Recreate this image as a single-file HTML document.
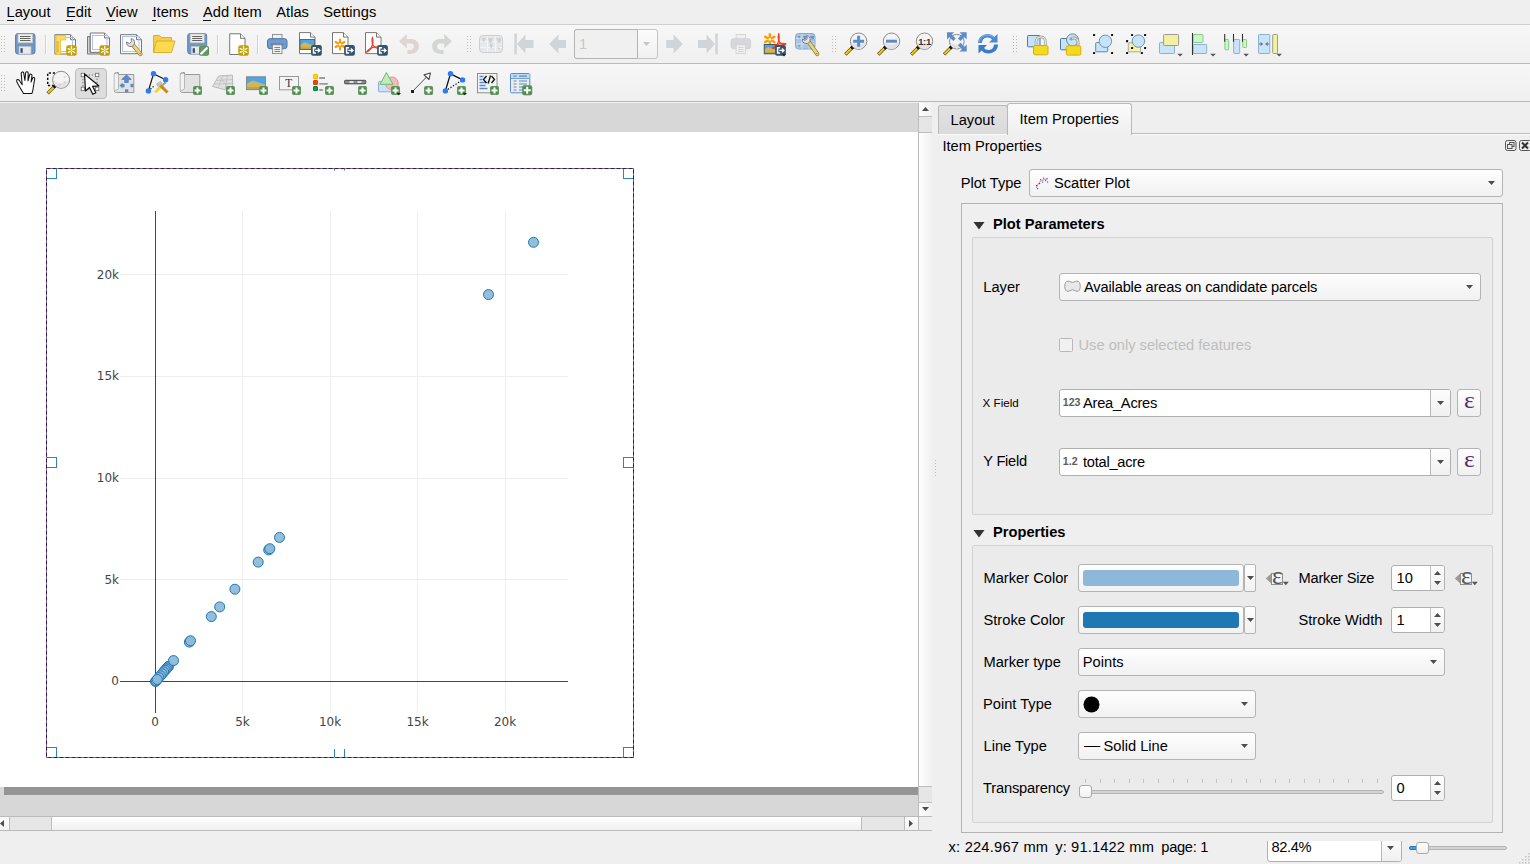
<!DOCTYPE html>
<html><head><meta charset="utf-8"><title>Layout</title>
<style>
html,body{margin:0;padding:0}
body{width:1530px;height:864px;overflow:hidden;background:#efefef;position:relative;
font-family:"Liberation Sans",sans-serif;font-size:14.67px;color:#000}
.b{position:absolute;box-sizing:border-box}
.t{position:absolute;white-space:nowrap;line-height:20px}
.combo{border:1px solid #b4b4b4;border-radius:3px;background:linear-gradient(#fefefe,#f1f1f1)}
.edit{border:1px solid #b0b0b0;border-radius:3px;background:#fff}
.frame{border:1px solid #c9c9c9}
u{text-decoration:none;border-bottom:1px solid #000}
.dis{color:#bebebe}
</style></head><body>

<div class="t " style="left:6.5px;top:2.00px;font-size:14.67px;letter-spacing:0.000px;">Layout</div>
<div class="t " style="left:66px;top:2.00px;font-size:14.67px;letter-spacing:0.000px;">Edit</div>
<div class="t " style="left:106px;top:2.00px;font-size:14.67px;letter-spacing:0.000px;">View</div>
<div class="t " style="left:152.5px;top:2.00px;font-size:14.67px;letter-spacing:0.000px;">Items</div>
<div class="t " style="left:203px;top:2.00px;font-size:14.67px;letter-spacing:0.000px;">Add Item</div>
<div class="t " style="left:276.3px;top:2.00px;font-size:14.67px;letter-spacing:0.000px;">Atlas</div>
<div class="t " style="left:323.3px;top:2.00px;font-size:14.67px;letter-spacing:0.000px;">Settings</div>
<div class="b " style="left:6.5px;top:20px;width:7.5px;height:1px;background:#111"></div>
<div class="b " style="left:65.6px;top:20px;width:7.6px;height:1px;background:#111"></div>
<div class="b " style="left:106px;top:20px;width:9.2px;height:1px;background:#111"></div>
<div class="b " style="left:152.4px;top:20px;width:3.6px;height:1px;background:#111"></div>
<div class="b " style="left:203px;top:20px;width:8.2px;height:1px;background:#111"></div>
<div class="b " style="left:0px;top:24px;width:1530px;height:40px;background:linear-gradient(#f7f7f7,#efefef);border-top:1px solid #cfcfcf;"></div>
<div class="b " style="left:0px;top:63px;width:1530px;height:39px;background:linear-gradient(#f7f7f7,#efefef);border-top:1px solid #bcbcbc;"></div>
<div class="b " style="left:0px;top:101px;width:1530px;height:1px;background:#b9b9b9"></div>
<svg class="b" style="left:1px;top:36px;" width="4" height="16" viewBox="0 0 4 16"><rect x="0" y="0" width="1" height="1" fill="#bcbcbc"/><rect x="3" y="0" width="1" height="1" fill="#bcbcbc"/><rect x="0" y="3" width="1" height="1" fill="#bcbcbc"/><rect x="3" y="3" width="1" height="1" fill="#bcbcbc"/><rect x="0" y="6" width="1" height="1" fill="#bcbcbc"/><rect x="3" y="6" width="1" height="1" fill="#bcbcbc"/><rect x="0" y="9" width="1" height="1" fill="#bcbcbc"/><rect x="3" y="9" width="1" height="1" fill="#bcbcbc"/><rect x="0" y="12" width="1" height="1" fill="#bcbcbc"/><rect x="3" y="12" width="1" height="1" fill="#bcbcbc"/><rect x="0" y="15" width="1" height="1" fill="#bcbcbc"/><rect x="3" y="15" width="1" height="1" fill="#bcbcbc"/></svg>
<svg class="b" style="left:1px;top:75px;" width="4" height="16" viewBox="0 0 4 16"><rect x="0" y="0" width="1" height="1" fill="#bcbcbc"/><rect x="3" y="0" width="1" height="1" fill="#bcbcbc"/><rect x="0" y="3" width="1" height="1" fill="#bcbcbc"/><rect x="3" y="3" width="1" height="1" fill="#bcbcbc"/><rect x="0" y="6" width="1" height="1" fill="#bcbcbc"/><rect x="3" y="6" width="1" height="1" fill="#bcbcbc"/><rect x="0" y="9" width="1" height="1" fill="#bcbcbc"/><rect x="3" y="9" width="1" height="1" fill="#bcbcbc"/><rect x="0" y="12" width="1" height="1" fill="#bcbcbc"/><rect x="3" y="12" width="1" height="1" fill="#bcbcbc"/><rect x="0" y="15" width="1" height="1" fill="#bcbcbc"/><rect x="3" y="15" width="1" height="1" fill="#bcbcbc"/></svg>
<svg class="b" style="left:13px;top:32px;overflow:visible" width="24" height="24" viewBox="0 0 24 24"><rect x="2.5" y="1.5" width="19.5" height="20.5" rx="2.500" fill="#6d97c5" stroke="#5a84b6"/><rect x="5.0" y="2.0" width="14.5" height="8.8" fill="#eeeeec" stroke="#c4c4c4" stroke-width="0.700"/><path d="M7.0 4.5h10.5M7.0 6.5h10.5M7.0 8.5h10.5" stroke="#555" stroke-width="0.900"/><rect x="6.0" y="14.4" width="12.0" height="7.6" fill="#e9e9e9" stroke="#bdbdbd" stroke-width="0.700"/><rect x="7.5" y="16.2" width="2.200" height="4.6" fill="#2f4f72"/></svg>
<svg class="b" style="left:53px;top:32px;overflow:visible" width="24" height="24" viewBox="0 0 24 24"><path d="M1.9 2.7H17.5L22.5 7.7V22.0H1.9z" fill="#fff" stroke="#777" stroke-width="1" stroke-linejoin="round"/><path d="M17.5 2.7V7.7H22.5" fill="#f4f4f4" stroke="#777" stroke-width="1" stroke-linejoin="round"/><rect x="5.500" y="5.500" width="14" height="14" fill="none" stroke="#aebff5" stroke-width="1"/><path d="M3 3.500H12.500V8H7.500V22.500H3z" fill="#fbdc5e" stroke="#e8bc30" stroke-width="0.800" stroke-linejoin="round"/><path d="M3.500 10h2.500M3.500 12h2M3.500 14h2.500M3.500 16h2M3.500 18h2.500M3.500 20h2" stroke="#c0901a" stroke-width="0.800"/><rect x="13.2" y="13.3" width="10.5" height="10.5" rx="2" fill="#c4a000"/><g stroke="#fff" stroke-width="1.300" stroke-linecap="round"><path d="M18.45 14.75V22.35M15.149999999999999 16.650000000000002L21.75 20.45M15.149999999999999 20.45L21.75 16.650000000000002"/></g><circle cx="18.45" cy="18.55" r="1.300" fill="#c4a000"/><circle cx="18.45" cy="18.55" r="0.700" fill="#fff"/></svg>
<svg class="b" style="left:86px;top:32px;overflow:visible" width="24" height="24" viewBox="0 0 24 24"><path d="M1.500 4.500H4V20H19V22H1.500z" fill="#d4d4d4" stroke="#777" stroke-linejoin="round"/><path d="M4.3 1H18.5L23.5 6V20.3H4.3z" fill="#fff" stroke="#777" stroke-width="1" stroke-linejoin="round"/><path d="M18.5 1V6H23.5" fill="#f4f4f4" stroke="#777" stroke-width="1" stroke-linejoin="round"/><rect x="6.500" y="3.500" width="14.500" height="14" fill="none" stroke="#aebff5" stroke-width="1"/><rect x="13.5" y="13.3" width="10.5" height="10.5" rx="2" fill="#c4a000"/><g stroke="#fff" stroke-width="1.300" stroke-linecap="round"><path d="M18.75 14.75V22.35M15.45 16.650000000000002L22.05 20.45M15.45 20.45L22.05 16.650000000000002"/></g><circle cx="18.75" cy="18.55" r="1.300" fill="#c4a000"/><circle cx="18.75" cy="18.55" r="0.700" fill="#fff"/></svg>
<svg class="b" style="left:119px;top:32px;overflow:visible" width="24" height="24" viewBox="0 0 24 24"><path d="M1.5 2.7H17.5L22.5 7.7V21.7H1.5z" fill="#fff" stroke="#777" stroke-width="1" stroke-linejoin="round"/><path d="M17.5 2.7V7.7H22.5" fill="#f4f4f4" stroke="#777" stroke-width="1" stroke-linejoin="round"/><rect x="3.500" y="4.500" width="16.500" height="15" fill="none" stroke="#aebff5" stroke-width="1"/><path d="M13.8 12.8L21.5 22" stroke="#8a7a3a" stroke-width="4.200" stroke-linecap="round"/><path d="M14.0 13.0L21.5 22" stroke="#ecd47a" stroke-width="2.800" stroke-linecap="round"/><circle cx="21.1" cy="21.6" r="0.600" fill="#6a5a2a"/><path d="M7.7 10.0A3.900 3.900 0 1 0 12.0 6.7L12.5 9.5L10.5 11.5z" fill="#e2e2e2" stroke="#7c7c7c" stroke-width="1" stroke-linejoin="round"/></svg>
<svg class="b" style="left:152px;top:32px;overflow:visible" width="24" height="24" viewBox="0 0 24 24"><path d="M1.500 20.500V3.500H7.500L9 5.500H19.500V9" fill="#f5cf45" stroke="#d8b030" stroke-linejoin="round"/><path d="M1.500 20.500L4.500 9H23L19.500 20.500z" fill="#fcd94f" stroke="#d8b030" stroke-linejoin="round"/></svg>
<svg class="b" style="left:185px;top:32px;overflow:visible" width="24" height="24" viewBox="0 0 24 24"><rect x="2.7" y="1.5" width="19" height="20.5" rx="2.500" fill="#6d97c5" stroke="#5a84b6"/><rect x="5.2" y="2.0" width="14" height="8.8" fill="#eeeeec" stroke="#c4c4c4" stroke-width="0.700"/><path d="M7.2 4.5h10M7.2 6.5h10M7.2 8.5h10" stroke="#555" stroke-width="0.900"/><rect x="6.2" y="14.4" width="11.5" height="7.6" fill="#e9e9e9" stroke="#bdbdbd" stroke-width="0.700"/><rect x="7.7" y="16.2" width="2.200" height="4.6" fill="#2f4f72"/><rect x="14" y="14" width="10" height="9.800" rx="2" fill="#4e8b4e"/><rect x="14.600" y="14.600" width="8.800" height="8.600" rx="1.500" fill="#6fa36f" opacity="0.6"/><path d="M16.200 21.600L21.800 16.200" stroke="#fff" stroke-width="2.200" stroke-linecap="round"/></svg>
<svg class="b" style="left:226px;top:32px;overflow:visible" width="24" height="24" viewBox="0 0 24 24"><path d="M3.7 1.8H14.5L19.0 6.3V22.5H3.7z" fill="#fff" stroke="#777" stroke-width="1" stroke-linejoin="round"/><path d="M14.5 1.8V6.3H19.0" fill="#f4f4f4" stroke="#777" stroke-width="1" stroke-linejoin="round"/><rect x="12.3" y="13.2" width="10.5" height="10.5" rx="2" fill="#c4a000"/><g stroke="#fff" stroke-width="1.300" stroke-linecap="round"><path d="M17.55 14.649999999999999V22.25M14.25 16.55L20.85 20.349999999999998M14.25 20.349999999999998L20.85 16.55"/></g><circle cx="17.55" cy="18.45" r="1.300" fill="#c4a000"/><circle cx="17.55" cy="18.45" r="0.700" fill="#fff"/></svg>
<svg class="b" style="left:264px;top:32px;overflow:visible" width="24" height="24" viewBox="0 0 24 24"><rect x="8.500" y="2.500" width="9.500" height="7" fill="#f0f0f0" stroke="#8a8a8a" stroke-width="0.900"/><rect x="3.500" y="6.700" width="19.500" height="10" rx="2.500" fill="#6f9bcf" stroke="#4a73a8"/><rect x="7" y="11.500" width="12.500" height="2" fill="#4a73a8" opacity="0.8"/><rect x="8.500" y="12.800" width="9.500" height="8.800" fill="#f0f0f0" stroke="#8a8a8a" stroke-width="0.900"/><path d="M10.500 15.500h5.500M10.500 17.500h5.500M10.500 19.500h5.500" stroke="#777" stroke-width="0.900"/></svg>
<svg class="b" style="left:297px;top:32px;overflow:visible" width="24" height="24" viewBox="0 0 24 24"><path d="M2.5 0.6H13.5L18.0 5.1V21.6H2.5z" fill="#fff" stroke="#777" stroke-width="1" stroke-linejoin="round"/><path d="M13.5 0.6V5.1H18.0" fill="#f4f4f4" stroke="#777" stroke-width="1" stroke-linejoin="round"/><rect x="3" y="7.5" width="14.5" height="10" fill="#4aa6ea"/><path d="M3 17.5V13.0L7.64 10.3L17.5 13.7V17.5z" fill="#cdb65c"/><path d="M3 17.5V15.5H17.5V17.5z" fill="#b79c3c" opacity="0.7"/><rect x="3" y="7.5" width="14.5" height="10" fill="none" stroke="#666" stroke-width="1"/><rect x="14" y="13" width="10.8" height="10.8" rx="2" fill="#34566d"/><path d="M19 15.8H16.5V21H19" fill="none" stroke="#fff" stroke-width="1.500"/><path d="M18.2 18.4H22.5M20.8 16.4L22.9 18.4L20.8 20.4" fill="none" stroke="#fff" stroke-width="1.300"/></svg>
<svg class="b" style="left:330px;top:32px;overflow:visible" width="24" height="24" viewBox="0 0 24 24"><path d="M2.5 0.6H13.5L18.0 5.1V21.6H2.5z" fill="#fff" stroke="#777" stroke-width="1" stroke-linejoin="round"/><path d="M13.5 0.6V5.1H18.0" fill="#f4f4f4" stroke="#777" stroke-width="1" stroke-linejoin="round"/><g stroke="#ff9a00" stroke-width="2.2" stroke-linecap="round"><path d="M10 7.5V17.5M5.65 10.00L14.35 15.00M5.65 15.00L14.35 10.00"/></g><circle cx="10" cy="12.5" r="1.300" fill="#fff"/><rect x="14.1" y="13" width="10.8" height="10.8" rx="2" fill="#34566d"/><path d="M19.1 15.8H16.6V21H19.1" fill="none" stroke="#fff" stroke-width="1.500"/><path d="M18.3 18.4H22.6M20.9 16.4L23.0 18.4L20.9 20.4" fill="none" stroke="#fff" stroke-width="1.300"/></svg>
<svg class="b" style="left:363px;top:32px;overflow:visible" width="24" height="24" viewBox="0 0 24 24"><path d="M2.5 0.6H13.5L18.0 5.1V21.6H2.5z" fill="#fff" stroke="#777" stroke-width="1" stroke-linejoin="round"/><path d="M13.5 0.6V5.1H18.0" fill="#f4f4f4" stroke="#777" stroke-width="1" stroke-linejoin="round"/><g transform="translate(9.5 12.5) scale(1)" fill="none" stroke="#e8402a" stroke-width="1.300" stroke-linecap="round"><path d="M0 -7C1 -3 0.500 0 -1.500 3.500C-3 6 -4.500 7.500 -6 7.500"/><path d="M0 -7C-1 -3 -0.500 0 2 2.500C3.500 3.800 6 4 7 3"/><path d="M-5.500 7C-2.500 3 3 1.500 7 2.800"/></g><rect x="14.1" y="13" width="10.8" height="10.8" rx="2" fill="#34566d"/><path d="M19.1 15.8H16.6V21H19.1" fill="none" stroke="#fff" stroke-width="1.500"/><path d="M18.3 18.4H22.6M20.9 16.4L23.0 18.4L20.9 20.4" fill="none" stroke="#fff" stroke-width="1.300"/></svg>
<svg class="b" style="left:396px;top:32px;overflow:visible" width="24" height="24" viewBox="0 0 24 24"><path transform="translate(-1.300 -1.200) scale(1.100)" d="M4 9.500L11 3V7.500H15C19.500 7.500 22 10.500 22 14C22 18 19 21 14 21H11.500V17.500H14C16 17.500 17.500 16 17.500 14.200C17.500 12.500 16.500 11.500 14.500 11.500H11V16z" fill="#ddd5d1"/></svg>
<svg class="b" style="left:429px;top:32px;overflow:visible" width="24" height="24" viewBox="0 0 24 24"><path transform="translate(-1.300 -1.200) scale(1.100)" d="M22 9.500L15 3V7.500H11C6.500 7.500 4 10.500 4 14C4 18 7 21 12 21H14.500V17.500H12C10 17.500 8.500 16 8.500 14.200C8.500 12.500 9.500 11.500 11.500 11.500H15V16z" fill="#d3d7d3"/></svg>
<svg class="b" style="left:478px;top:32px;overflow:visible" width="24" height="24" viewBox="0 0 24 24"><rect x="1.500" y="3.500" width="23" height="17" rx="3.500" fill="#e6e8ea" stroke="#cdcfd1"/><path d="M9.500 4V20M17.500 4V20M2 9.500H24M2 15.500H24" stroke="#f6f6f6" stroke-width="0.800"/><path d="M4 6h4l-1 3-2 1zM10 6h5l-1 4-3 1zM12 11l3 1-1 5-2-2zM18 6h5v4l-3 1zM19 15l3 1-1 2z" fill="#cfd2d5"/></svg>
<svg class="b" style="left:511px;top:32px;overflow:visible" width="24" height="24" viewBox="0 0 24 24"><rect x="3.300" y="1.500" width="2.600" height="21" rx="1" fill="#d2d5d8"/><path d="M6 12L14.500 2.500V8H22.500V16H14.500V21.500z" fill="#d2d5d8"/></svg>
<svg class="b" style="left:544px;top:32px;overflow:visible" width="24" height="24" viewBox="0 0 24 24"><path d="M5 12L14.500 2.500V8H22V16H14.500V21.500z" fill="#d2d5d8"/></svg>
<svg class="b" style="left:662px;top:32px;overflow:visible" width="24" height="24" viewBox="0 0 24 24"><path d="M21 12L11.500 2.500V8H4.200V16H11.500V21.500z" fill="#d2d5d8"/></svg>
<svg class="b" style="left:695px;top:32px;overflow:visible" width="24" height="24" viewBox="0 0 24 24"><rect x="20.200" y="1.500" width="2.600" height="21" rx="1" fill="#d2d5d8"/><path d="M20 12L11.500 2.500V8H3V16H11.500V21.500z" fill="#d2d5d8"/></svg>
<svg class="b" style="left:728px;top:32px;overflow:visible" width="24" height="24" viewBox="0 0 24 24"><g transform="translate(-0.400 0)"><rect x="8.500" y="2.500" width="9.500" height="7" fill="#efefef" stroke="#d4d4d4" stroke-width="0.900"/><rect x="3.500" y="6.700" width="19.500" height="10" rx="2.500" fill="#d6d9dc" stroke="#cfd2d5"/><rect x="7" y="11.500" width="12.500" height="2" fill="#cfd2d5" opacity="0.8"/><rect x="8.500" y="12.800" width="9.500" height="8.800" fill="#efefef" stroke="#d4d4d4" stroke-width="0.900"/><path d="M10.500 15.500h5.500M10.500 17.500h5.500M10.500 19.500h5.500" stroke="#d0d0d0" stroke-width="0.900"/></g></svg>
<svg class="b" style="left:761px;top:32px;overflow:visible" width="24" height="24" viewBox="0 0 24 24"><g stroke="#ff9a00" stroke-width="2.4" stroke-linecap="round"><path d="M8.8 2.1000000000000005V12.7M4.19 4.75L13.41 10.05M4.19 10.05L13.41 4.75"/></g><circle cx="8.8" cy="7.4" r="1.300" fill="#fff"/><rect x="3.3" y="12.5" width="12.5" height="9.3" fill="#4aa6ea"/><path d="M3.3 21.8V17.615000000000002L7.3 15.104000000000001L15.8 18.266V21.8z" fill="#cdb65c"/><path d="M3.3 21.8V19.94H15.8V21.8z" fill="#b79c3c" opacity="0.7"/><rect x="3.3" y="12.5" width="12.5" height="9.3" fill="none" stroke="#456" stroke-width="1"/><g transform="translate(17.7 9) scale(1)" fill="none" stroke="#e8402a" stroke-width="1.300" stroke-linecap="round"><path d="M0 -7C1 -3 0.500 0 -1.500 3.500C-3 6 -4.500 7.500 -6 7.500"/><path d="M0 -7C-1 -3 -0.500 0 2 2.500C3.500 3.800 6 4 7 3"/><path d="M-5.500 7C-2.500 3 3 1.500 7 2.800"/></g><rect x="14.1" y="13" width="10.8" height="10.8" rx="2" fill="#34566d"/><path d="M19.1 15.8H16.6V21H19.1" fill="none" stroke="#fff" stroke-width="1.500"/><path d="M18.3 18.4H22.6M20.9 16.4L23.0 18.4L20.9 20.4" fill="none" stroke="#fff" stroke-width="1.300"/><path d="M21 22l4 0l-2 2.500z" fill="#222"/></svg>
<svg class="b" style="left:794px;top:32px;overflow:visible" width="24" height="24" viewBox="0 0 24 24"><rect x="1.500" y="1.500" width="19.500" height="15.500" rx="3" fill="#a9c5e5" stroke="#86a9d2"/><path d="M8 2V17M15 2V17M2 6.500H21M2 12H21" stroke="#d6e4f4" stroke-width="0.800"/><path d="M3.500 4h3l-1 2.500zM9 4h4l-1 3-2 0.500zM16 4h4v3l-2 0.500zM4 13l2 0.500-0.500 2zM16 13l3 0.500-1 2z" fill="#6f93c0"/><path d="M14.5 9.8L23.3 22" stroke="#8a7a3a" stroke-width="4.200" stroke-linecap="round"/><path d="M14.7 10.0L23.3 22" stroke="#ecd47a" stroke-width="2.800" stroke-linecap="round"/><circle cx="22.900000000000002" cy="21.6" r="0.600" fill="#6a5a2a"/><path d="M8.399999999999999 7.0A3.900 3.900 0 1 0 12.7 3.7L13.2 6.5L11.2 8.5z" fill="#e2e2e2" stroke="#7c7c7c" stroke-width="1" stroke-linejoin="round"/></svg>
<svg class="b" style="left:843px;top:32px;overflow:visible" width="24" height="24" viewBox="0 0 24 24"><path d="M10.5 14.3L2.3 22.5" stroke="#4a3c00" stroke-width="3.200" stroke-linecap="butt"/><path d="M8.2 16.6L2.6 22.2" stroke="#f6c713" stroke-width="2.100"/><path d="M10.7 14.1L8.3 16.5" stroke="#111" stroke-width="3.400"/><circle cx="15.6" cy="9.2" r="8.2" fill="#f4f4f4" stroke="#8a8a8a" stroke-width="1"/><path d="M8.9 10.2A6.699999999999999 6.699999999999999 0 0 0 22.299999999999997 10.2A11.479999999999999 11.479999999999999 0 0 1 8.9 10.2z" fill="#e2e2e2"/><path d="M15.600 3.700V14.700M10.100 9.200H21.100" stroke="#5b8cc9" stroke-width="3"/></svg>
<svg class="b" style="left:876px;top:32px;overflow:visible" width="24" height="24" viewBox="0 0 24 24"><path d="M10.4 14.3L2.2 22.5" stroke="#4a3c00" stroke-width="3.200" stroke-linecap="butt"/><path d="M8.1 16.6L2.5 22.2" stroke="#f6c713" stroke-width="2.100"/><path d="M10.6 14.1L8.2 16.5" stroke="#111" stroke-width="3.400"/><circle cx="15.5" cy="9.2" r="8.2" fill="#f4f4f4" stroke="#8a8a8a" stroke-width="1"/><path d="M8.8 10.2A6.699999999999999 6.699999999999999 0 0 0 22.2 10.2A11.479999999999999 11.479999999999999 0 0 1 8.8 10.2z" fill="#e2e2e2"/><path d="M10 9.200H21" stroke="#5b8cc9" stroke-width="3"/></svg>
<svg class="b" style="left:909px;top:32px;overflow:visible" width="24" height="24" viewBox="0 0 24 24"><path d="M10.4 14.3L2.2 22.5" stroke="#4a3c00" stroke-width="3.200" stroke-linecap="butt"/><path d="M8.1 16.6L2.5 22.2" stroke="#f6c713" stroke-width="2.100"/><path d="M10.6 14.1L8.2 16.5" stroke="#111" stroke-width="3.400"/><circle cx="15.5" cy="9.2" r="8.2" fill="#f4f4f4" stroke="#8a8a8a" stroke-width="1"/><path d="M8.8 10.2A6.699999999999999 6.699999999999999 0 0 0 22.2 10.2A11.479999999999999 11.479999999999999 0 0 1 8.8 10.2z" fill="#e2e2e2"/><text x="15.500" y="13" text-anchor="middle" font-family="Liberation Sans, sans-serif" font-weight="bold" font-size="9.500" letter-spacing="-0.4" fill="#333">1:1</text></svg>
<svg class="b" style="left:942px;top:32px;overflow:visible" width="24" height="24" viewBox="0 0 24 24"><path d="M10.3 14.2L2.1 22.4" stroke="#4a3c00" stroke-width="3.200" stroke-linecap="butt"/><path d="M8.0 16.5L2.4 22.1" stroke="#f6c713" stroke-width="2.100"/><path d="M10.5 14.0L8.1 16.4" stroke="#111" stroke-width="3.400"/><circle cx="14.8" cy="9.7" r="7.3" fill="#f4f4f4" stroke="#8a8a8a" stroke-width="1"/><path d="M9.0 10.7A5.8 5.8 0 0 0 20.6 10.7A10.219999999999999 10.219999999999999 0 0 1 9.0 10.7z" fill="#e2e2e2"/><path d="M5 0.3L12.2 0.3L5 7.5z" fill="#5b8cc9"/><path d="M7.5 2.8L12.5 7.8" stroke="#5b8cc9" stroke-width="3.600"/><path d="M24.7 0.3L17.5 0.3L24.7 7.5z" fill="#5b8cc9"/><path d="M22.2 2.8L17.2 7.8" stroke="#5b8cc9" stroke-width="3.600"/><path d="M24.7 19.6L17.5 19.6L24.7 12.400000000000002z" fill="#5b8cc9"/><path d="M22.2 17.1L17.2 12.100000000000001" stroke="#5b8cc9" stroke-width="3.600"/></svg>
<svg class="b" style="left:975px;top:32px;overflow:visible" width="24" height="24" viewBox="0 0 24 24"><path d="M3 11C3 5.500 7.500 2 12.500 2C15.500 2 17.800 3.200 19.300 5L22.500 2V10.500H14L17 7.500C16 6.300 14.500 5.500 12.500 5.500C9.500 5.500 7 7.700 7 11z" fill="#4a8ad2"/><path d="M23 12.500C23 18 18.500 21.500 13.500 21.500C10.500 21.500 8.200 20.300 6.700 18.500L3.500 21.500V13H12L9 16C10 17.200 11.500 18 13.500 18C16.500 18 19 15.800 19 12.500z" fill="#3b7cc6"/><path d="M4 10C4.500 6 8 3 12.500 3C15 3 17 4 18.500 5.500" fill="none" stroke="#8bb8ea" stroke-width="1"/></svg>
<svg class="b" style="left:1025px;top:32px;overflow:visible" width="24" height="24" viewBox="0 0 24 24"><rect x="2.5" y="3.5" width="12.5" height="11.3" rx="0.800" fill="#c6e3f8" stroke="#4f7a9c" stroke-width="1"/><path d="M11 14V9.500A4.700 4.700 0 0 1 20.400 9.500V14" fill="none" stroke="#a2a2a2" stroke-width="2.700"/><path d="M11 14V9.500A4.700 4.700 0 0 1 20.400 9.500V14" fill="none" stroke="#e4e4e4" stroke-width="1.300"/><rect x="8.5" y="13.5" width="14.500" height="9.300" rx="1.500" fill="#f2da1e" stroke="#d9ae00" stroke-width="1"/></svg>
<svg class="b" style="left:1058px;top:32px;overflow:visible" width="24" height="24" viewBox="0 0 24 24"><rect x="2.5" y="6.5" width="11.5" height="11.3" rx="0.800" fill="#c6e3f8" stroke="#4f7a9c" stroke-width="1"/><circle cx="14.500" cy="7.900" r="6" fill="#c6e3f8" stroke="#5b8cb0"/><path d="M20 14V9.500A4.300 4.300 0 0 0 12.500 7.500" fill="none" stroke="#9a9a9a" stroke-width="3"/><path d="M20 14V9.500A4.300 4.300 0 0 0 12.500 7.500" fill="none" stroke="#dedede" stroke-width="1.400"/><path d="M11.200 7.200l3-1.500-0.500 3z" fill="#9a9a9a"/><rect x="8.3" y="13.8" width="14.500" height="9.300" rx="1.500" fill="#f2da1e" stroke="#d9ae00" stroke-width="1"/></svg>
<svg class="b" style="left:1091px;top:32px;overflow:visible" width="24" height="24" viewBox="0 0 24 24"><rect x="4.7" y="10.5" width="12" height="9.3" rx="0.800" fill="#c6e3f8" stroke="#5f88a8" stroke-width="1"/><circle cx="14.400" cy="9.300" r="6.200" fill="#c6e3f8" stroke="#6d94b4"/><rect x="2" y="1.9" width="2.100" height="2.100" rx="0.500" fill="#111"/><rect x="20" y="1.9" width="2.100" height="2.100" rx="0.500" fill="#111"/><rect x="2" y="19.9" width="2.100" height="2.100" rx="0.500" fill="#111"/><rect x="20" y="19.9" width="2.100" height="2.100" rx="0.500" fill="#111"/></svg>
<svg class="b" style="left:1124px;top:32px;overflow:visible" width="24" height="24" viewBox="0 0 24 24"><rect x="4.3" y="10.8" width="12.3" height="9" rx="0.800" fill="#f4f4a4" stroke="#a8a8a8" stroke-width="1"/><circle cx="14.400" cy="9.100" r="6.200" fill="#c6e3f8" stroke="#6d94b4"/><rect x="7" y="1.9" width="2.100" height="2.100" rx="0.500" fill="#111"/><rect x="20" y="1.9" width="2.100" height="2.100" rx="0.500" fill="#111"/><rect x="2" y="8.1" width="2.100" height="2.100" rx="0.500" fill="#111"/><rect x="7" y="15" width="2.100" height="2.100" rx="0.500" fill="#111"/><rect x="20" y="15" width="2.100" height="2.100" rx="0.500" fill="#111"/><rect x="2" y="19.9" width="2.100" height="2.100" rx="0.500" fill="#111"/><rect x="16.8" y="19.9" width="2.100" height="2.100" rx="0.500" fill="#111"/></svg>
<svg class="b" style="left:1157px;top:32px;overflow:visible" width="24" height="24" viewBox="0 0 24 24"><rect x="2.5" y="10.5" width="15" height="11" rx="0.800" fill="#c8e4f8" stroke="#8ab0d2" stroke-width="1"/><rect x="6.6" y="2.5" width="15" height="11" rx="0.800" fill="#f4f0a0" stroke="#9a9a9a" stroke-width="1"/><path d="M20.3 21.7h5.600l-2.800 2.800z" fill="#555"/></svg>
<svg class="b" style="left:1190px;top:32px;overflow:visible" width="24" height="24" viewBox="0 0 24 24"><rect x="3" y="2.5" width="10" height="8" rx="0.800" fill="#c8f8c8" stroke="#8cc88c" stroke-width="1"/><rect x="3" y="12.5" width="13.7" height="9" rx="0.800" fill="#c8e4f8" stroke="#8ab0d2" stroke-width="1"/><path d="M2.500 1V23" stroke="#333" stroke-width="1.100"/><path d="M20.2 21.7h5.600l-2.800 2.800z" fill="#555"/></svg>
<svg class="b" style="left:1223px;top:32px;overflow:visible" width="24" height="24" viewBox="0 0 24 24"><rect x="1.9" y="7.5" width="3.8" height="10.3" rx="0.800" fill="#c8f8c8" stroke="#8cc88c" stroke-width="1"/><rect x="10.7" y="7.5" width="6" height="14" rx="0.800" fill="#c8e4f8" stroke="#8ab0d2" stroke-width="1"/><rect x="19.7" y="7.5" width="3.9" height="8" rx="0.800" fill="#c8f8c8" stroke="#8cc88c" stroke-width="1"/><path d="M1.700 2V9.700M10.500 2V9.700M19.500 2V9.700" stroke="#333" stroke-width="1.100"/><path d="M20.3 21.7h5.600l-2.800 2.800z" fill="#555"/></svg>
<svg class="b" style="left:1256px;top:32px;overflow:visible" width="24" height="24" viewBox="0 0 24 24"><rect x="2.5" y="2.5" width="11.3" height="19" rx="0.800" fill="#c8e4f8" stroke="#8ab0d2" stroke-width="1"/><rect x="16.7" y="2.5" width="4.8" height="19" rx="0.800" fill="#f4f0a0" stroke="#9a9a9a" stroke-width="1"/><path d="M3 12H5M13.300 12H11.300" stroke="#6e7a86" stroke-width="1"/><path d="M4.600 9.800L7.200 12L4.600 14.200zM11.700 9.800L9.100 12L11.700 14.200z" fill="#6e7a86"/><path d="M20.4 21.7h5.600l-2.800 2.800z" fill="#555"/></svg>
<div class="b " style="left:45px;top:35px;width:1px;height:19px;background:#d2d2d2"></div>
<div class="b " style="left:46px;top:35px;width:1px;height:19px;background:#fbfbfb"></div>
<div class="b " style="left:217px;top:35px;width:1px;height:19px;background:#d2d2d2"></div>
<div class="b " style="left:218px;top:35px;width:1px;height:19px;background:#fbfbfb"></div>
<div class="b " style="left:257px;top:35px;width:1px;height:19px;background:#d2d2d2"></div>
<div class="b " style="left:258px;top:35px;width:1px;height:19px;background:#fbfbfb"></div>
<svg class="b" style="left:467px;top:36px;" width="4" height="16" viewBox="0 0 4 16"><rect x="0" y="0" width="1" height="1" fill="#bcbcbc"/><rect x="3" y="0" width="1" height="1" fill="#bcbcbc"/><rect x="0" y="3" width="1" height="1" fill="#bcbcbc"/><rect x="3" y="3" width="1" height="1" fill="#bcbcbc"/><rect x="0" y="6" width="1" height="1" fill="#bcbcbc"/><rect x="3" y="6" width="1" height="1" fill="#bcbcbc"/><rect x="0" y="9" width="1" height="1" fill="#bcbcbc"/><rect x="3" y="9" width="1" height="1" fill="#bcbcbc"/><rect x="0" y="12" width="1" height="1" fill="#bcbcbc"/><rect x="3" y="12" width="1" height="1" fill="#bcbcbc"/><rect x="0" y="15" width="1" height="1" fill="#bcbcbc"/><rect x="3" y="15" width="1" height="1" fill="#bcbcbc"/></svg>
<svg class="b" style="left:832px;top:36px;" width="4" height="16" viewBox="0 0 4 16"><rect x="0" y="0" width="1" height="1" fill="#bcbcbc"/><rect x="3" y="0" width="1" height="1" fill="#bcbcbc"/><rect x="0" y="3" width="1" height="1" fill="#bcbcbc"/><rect x="3" y="3" width="1" height="1" fill="#bcbcbc"/><rect x="0" y="6" width="1" height="1" fill="#bcbcbc"/><rect x="3" y="6" width="1" height="1" fill="#bcbcbc"/><rect x="0" y="9" width="1" height="1" fill="#bcbcbc"/><rect x="3" y="9" width="1" height="1" fill="#bcbcbc"/><rect x="0" y="12" width="1" height="1" fill="#bcbcbc"/><rect x="3" y="12" width="1" height="1" fill="#bcbcbc"/><rect x="0" y="15" width="1" height="1" fill="#bcbcbc"/><rect x="3" y="15" width="1" height="1" fill="#bcbcbc"/></svg>
<svg class="b" style="left:1013px;top:36px;" width="4" height="16" viewBox="0 0 4 16"><rect x="0" y="0" width="1" height="1" fill="#bcbcbc"/><rect x="3" y="0" width="1" height="1" fill="#bcbcbc"/><rect x="0" y="3" width="1" height="1" fill="#bcbcbc"/><rect x="3" y="3" width="1" height="1" fill="#bcbcbc"/><rect x="0" y="6" width="1" height="1" fill="#bcbcbc"/><rect x="3" y="6" width="1" height="1" fill="#bcbcbc"/><rect x="0" y="9" width="1" height="1" fill="#bcbcbc"/><rect x="3" y="9" width="1" height="1" fill="#bcbcbc"/><rect x="0" y="12" width="1" height="1" fill="#bcbcbc"/><rect x="3" y="12" width="1" height="1" fill="#bcbcbc"/><rect x="0" y="15" width="1" height="1" fill="#bcbcbc"/><rect x="3" y="15" width="1" height="1" fill="#bcbcbc"/></svg>
<div class="b " style="left:574px;top:29px;width:84px;height:30px;border:1px solid #c4c4c4;border-radius:3px;background:linear-gradient(#fcfcfc,#f0f0f0)"></div>
<div class="b " style="left:574px;top:29px;width:64px;height:30px;border:1px solid #b4b4b4;border-radius:3px 0 0 3px;background:#f0f0f0"></div>
<div class="t " style="left:579px;top:34.00px;font-size:14.67px;letter-spacing:0.000px;color:#c8c8c8">1</div>
<svg class="b" style="left:643px;top:42px;" width="7" height="4" viewBox="0 0 7 4"><path d="M0 0H7L3.500 4z" fill="#c6c6c6"/></svg>
<div class="b " style="left:75px;top:68px;width:32px;height:31px;border:1px solid #bcbcbc;border-radius:4px;background:#dddddd"></div>
<svg class="b" style="left:13px;top:71px;overflow:visible" width="24" height="24" viewBox="0 0 24 24"><path d="M10.500 22.400L5.200 13.500C4 11.500 3 9.500 4 8.700C5 8 6.200 9 7 10.500L9.200 13.800L8.200 2.500C8.100 0.800 10.300 0.300 10.700 2L11.900 9.500L12.600 1.800C12.800 0.200 15.200 0.400 15.200 2.200L15 9.800L16.600 4C17 2.500 19.200 3 19 4.600L18 11L19.600 7.200C20.200 5.800 22 6.500 21.700 8L20.500 15C20.200 18 19.800 20 19 22.400z" fill="#fff" stroke="#111" stroke-width="1.050" stroke-linejoin="round"/></svg>
<svg class="b" style="left:46px;top:71px;overflow:visible" width="24" height="24" viewBox="0 0 24 24"><path d="M9 2H1.700V14.500H7" fill="none" stroke="#111" stroke-width="1.500" stroke-dasharray="2.200 1.800"/><path d="M9.8 14.1L1.6 22.3" stroke="#4a3c00" stroke-width="3.200" stroke-linecap="butt"/><path d="M7.5 16.4L1.9 22.0" stroke="#f6c713" stroke-width="2.100"/><path d="M10.0 13.9L7.6 16.3" stroke="#111" stroke-width="3.400"/><circle cx="15.1" cy="8.8" r="8.5" fill="#f4f4f4" stroke="#8a8a8a" stroke-width="1"/><path d="M8.1 9.8A7.0 7.0 0 0 0 22.1 9.8A11.899999999999999 11.899999999999999 0 0 1 8.1 9.8z" fill="#e2e2e2"/><circle cx="18.500" cy="6" r="0.900" fill="#d0d0d0"/><circle cx="18.500" cy="11" r="0.900" fill="#d0d0d0"/><circle cx="14" cy="14" r="0.900" fill="#d0d0d0"/></svg>
<svg class="b" style="left:79px;top:71px;overflow:visible" width="24" height="24" viewBox="0 0 24 24"><rect x="3.900" y="4" width="14.200" height="13.900" fill="none" stroke="#555" stroke-width="1" stroke-dasharray="1 2"/><rect x="2.2" y="2.3" width="3.400" height="3.400" fill="#fff" stroke="#777" stroke-width="0.900"/><rect x="16.4" y="2.3" width="3.400" height="3.400" fill="#fff" stroke="#777" stroke-width="0.900"/><rect x="2.2" y="16.2" width="3.400" height="3.400" fill="#fff" stroke="#777" stroke-width="0.900"/><rect x="16.4" y="16.2" width="3.400" height="3.400" fill="#fff" stroke="#777" stroke-width="0.900"/><path d="M5.500 3L6.500 20L10.500 16.500L13.800 23.300L16.800 21.800L13.500 15.300L19.800 14.800z" fill="#fff" stroke="#111" stroke-width="1.200" stroke-linejoin="round"/></svg>
<svg class="b" style="left:112px;top:71px;overflow:visible" width="24" height="24" viewBox="0 0 24 24"><path d="M4.500 1.500C3 1.500 2.300 2.300 2.300 3.500V19.500C2.300 20.800 3.200 21.500 4.500 21.500H21.800V3.500H6.500V1.500z" fill="#e2e2e2" stroke="#9a9a9a" stroke-linejoin="round"/><path d="M2.500 3.500C2.500 2 6.500 2 6.500 3.500V17.500C6.500 19 2.500 19 2.500 20" fill="#f2f2f2" stroke="#aaa" stroke-width="0.800"/><path d="M14.500 3.800L19.300 8.500H16.300V11.500H12.700V8.500H9.700z" fill="#5b8cc9" stroke="#3e6fa8" stroke-width="0.600"/><path d="M7.500 14.500L10.500 11.500V13H12.500V16.300H10.500V17.500z" fill="#5b8cc9"/><rect x="18.500" y="12.800" width="3" height="3.400" fill="#5b8cc9"/><rect x="13" y="18.300" width="3.300" height="3" fill="#5b8cc9"/></svg>
<svg class="b" style="left:145px;top:71px;overflow:visible" width="24" height="24" viewBox="0 0 24 24"><path d="M8.500 2.800L20.600 8.700M8.500 2.800L3.400 19.900" stroke="#111" stroke-width="1.200"/><path d="M3.400 19.900L9 15" stroke="#111" stroke-width="1.200" stroke-dasharray="1.200 1.600"/><path d="M20.500 11.500L12.500 18.500" stroke="#9a9a9a" stroke-width="2"/><path d="M11.500 13L15.500 10.500L17 12.500L13 15.500z" fill="#c8c8c8" stroke="#999" stroke-width="0.600"/><path d="M10 21.300L18 14.300" stroke="#f6d32d" stroke-width="2.600"/><path d="M15.500 14.500L22.500 21.500" stroke="#c88a10" stroke-width="3"/><circle cx="8.5" cy="2.8" r="2.700" fill="#2a7bf4"/><circle cx="20.6" cy="8.7" r="2.700" fill="#2a7bf4"/><circle cx="3.4" cy="19.9" r="2.700" fill="#2a7bf4"/></svg>
<svg class="b" style="left:178px;top:71px;overflow:visible" width="24" height="24" viewBox="0 0 24 24"><path d="M4.500 1.500C3 1.500 2.300 2.300 2.300 3.500V19.500C2.300 20.800 3.200 21.500 4.500 21.500H21.800V3.500H6.500V1.500z" fill="#e2e2e2" stroke="#9a9a9a" stroke-linejoin="round"/><path d="M2.500 3.500C2.500 2 6.500 2 6.500 3.500V17.500C6.500 19 2.500 19 2.500 20" fill="#f2f2f2" stroke="#aaa" stroke-width="0.800"/><rect x="15" y="15.1" width="9" height="9" rx="2" fill="#4e8b4e"/><rect x="15.6" y="15.7" width="7.8" height="7.8" rx="1.500" fill="none" stroke="#6ea56e" stroke-width="0.600"/><path d="M19.5 16.6V22.6M16.5 19.6H22.5" stroke="#fff" stroke-width="2"/></svg>
<svg class="b" style="left:211px;top:71px;overflow:visible" width="24" height="24" viewBox="0 0 24 24"><path d="M1.500 15.500L7.700 5L21.400 4.100L21.900 17L14 18.800z" fill="#e0e0e0" stroke="#b4b4b4" stroke-width="0.900" stroke-linejoin="round"/><path d="M5 9.500L21.500 8.500M3 13L21.700 12.500M12 4.700L7 17M16.500 4.400L14 18.500M9.500 7L18.500 18" fill="none" stroke="#bcbcbc" stroke-width="0.700"/><rect x="15" y="15.1" width="9" height="9" rx="2" fill="#4e8b4e"/><rect x="15.6" y="15.7" width="7.8" height="7.8" rx="1.500" fill="none" stroke="#6ea56e" stroke-width="0.600"/><path d="M19.5 16.6V22.6M16.5 19.6H22.5" stroke="#fff" stroke-width="2"/></svg>
<svg class="b" style="left:244px;top:71px;overflow:visible" width="24" height="24" viewBox="0 0 24 24"><rect x="2.5" y="5.8" width="19" height="12.8" fill="#4aa6ea"/><path d="M2.5 18.6V12.84L8.58 9.384L21.5 13.736V18.6z" fill="#cdb65c"/><path d="M2.5 18.6V16.040000000000003H21.5V18.6z" fill="#b79c3c" opacity="0.7"/><rect x="2.5" y="5.8" width="19" height="12.8" fill="none" stroke="#888" stroke-width="1"/><rect x="15" y="15.1" width="9" height="9" rx="2" fill="#4e8b4e"/><rect x="15.6" y="15.7" width="7.8" height="7.8" rx="1.500" fill="none" stroke="#6ea56e" stroke-width="0.600"/><path d="M19.5 16.6V22.6M16.5 19.6H22.5" stroke="#fff" stroke-width="2"/></svg>
<svg class="b" style="left:277px;top:71px;overflow:visible" width="24" height="24" viewBox="0 0 24 24"><rect x="2.500" y="5.500" width="19" height="13.300" fill="#f4f4f4" stroke="#9a9a9a"/><text x="11.700" y="16" text-anchor="middle" font-family="Liberation Serif, serif" font-size="11.500" fill="#333">T</text><rect x="15" y="15.1" width="9" height="9" rx="2" fill="#4e8b4e"/><rect x="15.6" y="15.7" width="7.8" height="7.8" rx="1.500" fill="none" stroke="#6ea56e" stroke-width="0.600"/><path d="M19.5 16.6V22.6M16.5 19.6H22.5" stroke="#fff" stroke-width="2"/></svg>
<svg class="b" style="left:310px;top:71px;overflow:visible" width="24" height="24" viewBox="0 0 24 24"><rect x="3.500" y="3.5" width="4" height="4" rx="0.500" fill="#ffd800" stroke="#ffa800" stroke-width="0.900"/><rect x="3.500" y="9.5" width="4" height="4" rx="0.500" fill="#f04a00" stroke="#d03800" stroke-width="0.900"/><rect x="3.500" y="15.6" width="4" height="4" rx="0.500" fill="#00a850" stroke="#006c34" stroke-width="0.900"/><path d="M9.200 7H15M9.200 12.800H17.800M9.200 19H12.800" stroke="#9c9c9c" stroke-width="1.800"/><rect x="15" y="15.1" width="9" height="9" rx="2" fill="#4e8b4e"/><rect x="15.6" y="15.7" width="7.8" height="7.8" rx="1.500" fill="none" stroke="#6ea56e" stroke-width="0.600"/><path d="M19.5 16.6V22.6M16.5 19.6H22.5" stroke="#fff" stroke-width="2"/></svg>
<svg class="b" style="left:343px;top:71px;overflow:visible" width="24" height="24" viewBox="0 0 24 24"><rect x="1.500" y="9.300" width="21.300" height="3.500" rx="1" fill="#8c8c8c" stroke="#444" stroke-width="1"/><path d="M6.500 11H10.500M14.500 11H18.500" stroke="#fff" stroke-width="1.700"/><rect x="15" y="15.1" width="9" height="9" rx="2" fill="#4e8b4e"/><rect x="15.6" y="15.7" width="7.8" height="7.8" rx="1.500" fill="none" stroke="#6ea56e" stroke-width="0.600"/><path d="M19.5 16.6V22.6M16.5 19.6H22.5" stroke="#fff" stroke-width="2"/></svg>
<svg class="b" style="left:376px;top:71px;overflow:visible" width="24" height="24" viewBox="0 0 24 24"><rect x="2.5" y="10.5" width="13" height="10.3" rx="0.800" fill="#c8e4f8" stroke="#8ab0d2" stroke-width="1"/><circle cx="15.900" cy="12.400" r="6.400" fill="#f8b9b9" stroke="#e29494"/><path d="M10.400 1.500L17 13.300H4z" fill="#b9f0b9" stroke="#74b474" stroke-linejoin="round"/><rect x="15" y="15.1" width="9" height="9" rx="2" fill="#4e8b4e"/><rect x="15.6" y="15.7" width="7.8" height="7.8" rx="1.500" fill="none" stroke="#6ea56e" stroke-width="0.600"/><path d="M19.5 16.6V22.6M16.5 19.6H22.5" stroke="#fff" stroke-width="2"/><path d="M20.500 22h4.500l-2.200 2.300z" fill="#222"/></svg>
<svg class="b" style="left:409px;top:71px;overflow:visible" width="24" height="24" viewBox="0 0 24 24"><path d="M3.500 20.500L18.500 5" stroke="#555" stroke-width="1"/><path d="M21.500 2L20 8.500L15 3.800z" fill="#f4f4f4" stroke="#444" stroke-width="1.100" stroke-linejoin="round"/><rect x="2" y="19" width="3" height="3" fill="#222"/><rect x="15.1" y="15.1" width="9" height="9" rx="2" fill="#4e8b4e"/><rect x="15.7" y="15.7" width="7.8" height="7.8" rx="1.500" fill="none" stroke="#6ea56e" stroke-width="0.600"/><path d="M19.6 16.6V22.6M16.6 19.6H22.6" stroke="#fff" stroke-width="2"/></svg>
<svg class="b" style="left:442px;top:71px;overflow:visible" width="24" height="24" viewBox="0 0 24 24"><path d="M8.500 2.800L20.600 8.900M8.500 2.800L3.400 19.900" stroke="#111" stroke-width="1.300"/><path d="M3.400 19.900L20.600 8.900" stroke="#111" stroke-width="1.300" stroke-dasharray="1.300 1.700"/><circle cx="8.5" cy="2.8" r="2.700" fill="#2a7bf4"/><circle cx="20.6" cy="8.9" r="2.700" fill="#2a7bf4"/><circle cx="3.4" cy="19.9" r="2.700" fill="#2a7bf4"/><rect x="15" y="15.1" width="9" height="9" rx="2" fill="#4e8b4e"/><rect x="15.6" y="15.7" width="7.8" height="7.8" rx="1.500" fill="none" stroke="#6ea56e" stroke-width="0.600"/><path d="M19.5 16.6V22.6M16.5 19.6H22.5" stroke="#fff" stroke-width="2"/><path d="M20.500 22h4.500l-2.200 2.300z" fill="#222"/></svg>
<svg class="b" style="left:475px;top:71px;overflow:visible" width="24" height="24" viewBox="0 0 24 24"><rect x="2.500" y="2.500" width="19.500" height="19.300" fill="#f3f3f3" stroke="#8e8e8e"/><path d="M4.500 5.500H8.500M4.500 8.500H7.500M4.500 11.500H12.500M4.500 14.500H10.500M4.500 17.500H12.500" stroke="#5b8cc9" stroke-width="1.700"/><path d="M11.500 5L8.500 8.500L11.500 12M13.200 12.500L15.500 4.500M16.500 5L19.500 8.500L16.500 12" fill="none" stroke="#111" stroke-width="1.300"/><rect x="15" y="15.1" width="9" height="9" rx="2" fill="#4e8b4e"/><rect x="15.6" y="15.7" width="7.8" height="7.8" rx="1.500" fill="none" stroke="#6ea56e" stroke-width="0.600"/><path d="M19.5 16.6V22.6M16.5 19.6H22.5" stroke="#fff" stroke-width="2"/></svg>
<svg class="b" style="left:508px;top:71px;overflow:visible" width="24" height="24" viewBox="0 0 24 24"><rect x="2.500" y="2.500" width="19.300" height="19.300" rx="1" fill="#ececec" stroke="#5b8cc9"/><rect x="3" y="3" width="18.300" height="4.300" fill="#bcdcf4"/><path d="M3 7.500H21.300" stroke="#5b8cc9" stroke-width="0.800"/><path d="M5.500 5.200H8.500M11 5.200H19M5.500 10H8.500M11 10H19M5.500 13H8.500M11 13H19M5.500 16H8.500M11 16H15M5.500 19H8.500M11 19H15" stroke="#5b8cc9" stroke-width="1.200"/><rect x="14.2" y="14.3" width="10" height="10" rx="2" fill="#4e8b4e"/><rect x="14.799999999999999" y="14.9" width="8.8" height="8.8" rx="1.500" fill="none" stroke="#6ea56e" stroke-width="0.600"/><path d="M19.2 15.8V22.8M15.7 19.3H22.7" stroke="#fff" stroke-width="2"/></svg>
<div class="b " style="left:0px;top:103px;width:918px;height:713px;background:#d7d7d7"></div>
<div class="b " style="left:0px;top:132px;width:918px;height:655px;background:#fff"></div>
<div class="b " style="left:4px;top:787px;width:914px;height:8px;background:#959595"></div>
<svg class="b" style="left:0px;top:132px;" width="918" height="655" viewBox="0 132 918 655"><line x1="242.5" y1="211" x2="242.5" y2="713" stroke="#eeeeee" stroke-width="1"/><line x1="120" y1="579.5" x2="568" y2="579.5" stroke="#eeeeee" stroke-width="1"/><line x1="330.5" y1="211" x2="330.5" y2="713" stroke="#eeeeee" stroke-width="1"/><line x1="120" y1="478.5" x2="568" y2="478.5" stroke="#eeeeee" stroke-width="1"/><line x1="417.5" y1="211" x2="417.5" y2="713" stroke="#eeeeee" stroke-width="1"/><line x1="120" y1="376.5" x2="568" y2="376.5" stroke="#eeeeee" stroke-width="1"/><line x1="505.5" y1="211" x2="505.5" y2="713" stroke="#eeeeee" stroke-width="1"/><line x1="120" y1="274.5" x2="568" y2="274.5" stroke="#eeeeee" stroke-width="1"/><line x1="155.5" y1="211" x2="155.5" y2="713" stroke="#444" stroke-width="1"/><line x1="120" y1="681.5" x2="568" y2="681.5" stroke="#444" stroke-width="1"/><text x="155.0" y="726" text-anchor="middle" font-family="DejaVu Sans, sans-serif" font-size="12" fill="#444">0</text><text x="119" y="685" text-anchor="end" font-family="DejaVu Sans, sans-serif" font-size="12" fill="#444">0</text><text x="242.5" y="726" text-anchor="middle" font-family="DejaVu Sans, sans-serif" font-size="12" fill="#444">5k</text><text x="119" y="584" text-anchor="end" font-family="DejaVu Sans, sans-serif" font-size="12" fill="#444">5k</text><text x="330.0" y="726" text-anchor="middle" font-family="DejaVu Sans, sans-serif" font-size="12" fill="#444">10k</text><text x="119" y="482" text-anchor="end" font-family="DejaVu Sans, sans-serif" font-size="12" fill="#444">10k</text><text x="417.5" y="726" text-anchor="middle" font-family="DejaVu Sans, sans-serif" font-size="12" fill="#444">15k</text><text x="119" y="380" text-anchor="end" font-family="DejaVu Sans, sans-serif" font-size="12" fill="#444">15k</text><text x="505.0" y="726" text-anchor="middle" font-family="DejaVu Sans, sans-serif" font-size="12" fill="#444">20k</text><text x="119" y="279" text-anchor="end" font-family="DejaVu Sans, sans-serif" font-size="12" fill="#444">20k</text><circle cx="155.5" cy="681.5" r="5" fill="#8cb9da" fill-opacity="0.92" stroke="#1f77b4" stroke-width="1"/><circle cx="156.2" cy="680.7" r="5" fill="#8cb9da" fill-opacity="0.92" stroke="#1f77b4" stroke-width="1"/><circle cx="168.6" cy="666.3" r="5" fill="#8cb9da" fill-opacity="0.92" stroke="#1f77b4" stroke-width="1"/><circle cx="167.4" cy="667.7" r="5" fill="#8cb9da" fill-opacity="0.92" stroke="#1f77b4" stroke-width="1"/><circle cx="166.3" cy="668.9" r="5" fill="#8cb9da" fill-opacity="0.92" stroke="#1f77b4" stroke-width="1"/><circle cx="165.1" cy="670.3" r="5" fill="#8cb9da" fill-opacity="0.92" stroke="#1f77b4" stroke-width="1"/><circle cx="163.7" cy="671.9" r="5" fill="#8cb9da" fill-opacity="0.92" stroke="#1f77b4" stroke-width="1"/><circle cx="162.2" cy="673.8" r="5" fill="#8cb9da" fill-opacity="0.92" stroke="#1f77b4" stroke-width="1"/><circle cx="160.4" cy="675.8" r="5" fill="#8cb9da" fill-opacity="0.92" stroke="#1f77b4" stroke-width="1"/><circle cx="158.8" cy="677.6" r="5" fill="#8cb9da" fill-opacity="0.92" stroke="#1f77b4" stroke-width="1"/><circle cx="157.2" cy="679.5" r="5" fill="#8cb9da" fill-opacity="0.92" stroke="#1f77b4" stroke-width="1"/><circle cx="173.5" cy="660.6" r="5" fill="#8cb9da" fill-opacity="0.92" stroke="#1f77b4" stroke-width="1"/><circle cx="189.4" cy="642.1" r="5" fill="#8cb9da" fill-opacity="0.92" stroke="#1f77b4" stroke-width="1"/><circle cx="190.5" cy="640.8" r="5" fill="#8cb9da" fill-opacity="0.92" stroke="#1f77b4" stroke-width="1"/><circle cx="211.3" cy="616.6" r="5" fill="#8cb9da" fill-opacity="0.92" stroke="#1f77b4" stroke-width="1"/><circle cx="219.7" cy="606.9" r="5" fill="#8cb9da" fill-opacity="0.92" stroke="#1f77b4" stroke-width="1"/><circle cx="234.9" cy="589.2" r="5" fill="#8cb9da" fill-opacity="0.92" stroke="#1f77b4" stroke-width="1"/><circle cx="258.2" cy="562.1" r="5" fill="#8cb9da" fill-opacity="0.92" stroke="#1f77b4" stroke-width="1"/><circle cx="268.7" cy="549.9" r="5" fill="#8cb9da" fill-opacity="0.92" stroke="#1f77b4" stroke-width="1"/><circle cx="269.8" cy="548.7" r="5" fill="#8cb9da" fill-opacity="0.92" stroke="#1f77b4" stroke-width="1"/><circle cx="279.5" cy="537.4" r="5" fill="#8cb9da" fill-opacity="0.92" stroke="#1f77b4" stroke-width="1"/><circle cx="488.5" cy="294.6" r="5" fill="#8cb9da" fill-opacity="0.92" stroke="#1f77b4" stroke-width="1"/><circle cx="533.5" cy="242.3" r="5" fill="#8cb9da" fill-opacity="0.92" stroke="#1f77b4" stroke-width="1"/></svg>
<svg class="b" style="left:0px;top:132px;" width="918" height="655" viewBox="0 132 918 655"><rect x="46.5" y="168.5" width="10" height="10" fill="none" stroke="#2e86c1" stroke-width="1"/><rect x="623.5" y="168.5" width="10" height="10" fill="none" stroke="#2e86c1" stroke-width="1"/><rect x="46.5" y="747.5" width="10" height="10" fill="none" stroke="#2e86c1" stroke-width="1"/><rect x="623.5" y="747.5" width="10" height="10" fill="none" stroke="#2e86c1" stroke-width="1"/><rect x="46.5" y="457.5" width="10" height="10" fill="none" stroke="#2e86c1" stroke-width="1"/><rect x="623.5" y="457.5" width="10" height="10" fill="none" stroke="#2e86c1" stroke-width="1"/><path d="M334.5 749v8M344.5 749v8M334.5 169v1.500M344.500 169v1.500" stroke="#2e86c1" stroke-width="1" fill="none"/><rect x="46.5" y="168.5" width="587" height="589" fill="none" stroke="#3d9bd5" stroke-width="1"/><rect x="46.5" y="168.5" width="587" height="589" fill="none" stroke="#5e0a33" stroke-width="1" stroke-dasharray="4 2"/></svg>
<div class="b " style="left:918px;top:103px;width:14px;height:714px;background:#e6e6e6;border-left:1px solid #bbb;"></div>
<div class="b " style="left:919px;top:103px;width:13px;height:13px;background:linear-gradient(90deg,#fdfdfd,#f1f1f1)"></div>
<svg class="b" style="left:921.5px;top:106.5px;" width="7" height="4" viewBox="0 0 7 4"><path d="M0 4L3.500 0L7 4z" fill="#4d4d4d"/></svg>
<div class="b " style="left:919px;top:116px;width:13px;height:1px;background:#bdbdbd"></div>
<div class="b " style="left:919px;top:132px;width:13px;height:655px;background:linear-gradient(90deg,#ffffff,#f0f0f0);border-top:1px solid #bdbdbd;border-bottom:1px solid #bdbdbd"></div>
<div class="b " style="left:919px;top:802px;width:13px;height:15px;background:linear-gradient(90deg,#fdfdfd,#f1f1f1);border-top:1px solid #bdbdbd"></div>
<svg class="b" style="left:921.5px;top:806.5px;" width="7" height="4" viewBox="0 0 7 4"><path d="M0 0H7L3.500 4z" fill="#4d4d4d"/></svg>
<div class="b " style="left:0px;top:816px;width:918px;height:15px;background:#e6e6e6;border-top:1px solid #bbb;border-bottom:1px solid #bbb"></div>
<div class="b " style="left:0px;top:817px;width:10px;height:13px;background:linear-gradient(#fdfdfd,#f1f1f1);border-right:1px solid #bdbdbd"></div>
<svg class="b" style="left:0px;top:820px;" width="4" height="7" viewBox="0 0 4 7"><path d="M4 0V7L0 3.500z" fill="#4d4d4d"/></svg>
<div class="b " style="left:51px;top:817px;width:811px;height:13px;background:linear-gradient(#ffffff,#f0f0f0);border-left:1px solid #bdbdbd;border-right:1px solid #bdbdbd"></div>
<div class="b " style="left:904px;top:817px;width:14px;height:13px;background:linear-gradient(#fdfdfd,#f1f1f1);border-left:1px solid #bdbdbd"></div>
<svg class="b" style="left:909px;top:820px;" width="4" height="7" viewBox="0 0 4 7"><path d="M0 0V7L4 3.500z" fill="#4d4d4d"/></svg>
<div class="b " style="left:918px;top:816px;width:14px;height:15px;background:#efefef;border-left:1px solid #bbb;border-top:1px solid #bbb;border-bottom:1px solid #bbb"></div>
<div class="b " style="left:938px;top:133px;width:592px;height:1px;background:#bdbdbd"></div>
<div class="b " style="left:938px;top:134px;width:592px;height:1px;background:#fbfbfb"></div>
<div class="b " style="left:938px;top:105px;width:70px;height:29px;border:1px solid #b9b9b9;border-bottom:none;border-radius:3px 3px 0 0;background:linear-gradient(#e2e2e2,#dadada)"></div>
<div class="b " style="left:1007px;top:103px;width:125px;height:32px;border:1px solid #b9b9b9;border-bottom:none;border-radius:3px 3px 0 0;background:linear-gradient(#fafafa,#efefef)"></div>
<div class="t " style="left:950.5px;top:110.00px;font-size:14.67px;letter-spacing:0.000px;">Layout</div>
<div class="t " style="left:1019.5px;top:109.00px;font-size:14.67px;letter-spacing:0.000px;">Item Properties</div>
<div class="t " style="left:942.4px;top:136.00px;font-size:14.67px;letter-spacing:0.000px;">Item Properties</div>
<svg class="b" style="left:1505px;top:140px;" width="12" height="11" viewBox="0 0 12 11"><rect x="0.5" y="0.5" width="10.5" height="10" rx="2" fill="#ececec" stroke="#555"/><rect x="4.500" y="2.500" width="4.500" height="4" fill="none" stroke="#555"/><rect x="2.500" y="4.500" width="4.500" height="4" fill="#ececec" stroke="#555"/></svg>
<svg class="b" style="left:1519px;top:140px;" width="12" height="11" viewBox="0 0 12 11"><rect x="0.5" y="0.5" width="12" height="10" rx="2" fill="#ececec" stroke="#555"/><path d="M3 2.500l6 6M9 2.500l-6 6" stroke="#333" stroke-width="2"/></svg>
<div class="t " style="left:960.7px;top:173.00px;font-size:14.67px;letter-spacing:0.000px;">Plot Type</div>
<div class="b combo" style="left:1029px;top:169px;width:474px;height:28px;"></div>
<svg class="b" style="left:1488.0px;top:181.0px;" width="7" height="4" viewBox="0 0 7 4"><path d="M0 0H7L3.5 4z" fill="#4d4d4d"/></svg>
<svg class="b" style="left:1035px;top:176px;" width="14" height="14" viewBox="0 0 14 14"><path d="M1.500 12C3 6 6 4 12 3" fill="none" stroke="#e06070" stroke-width="0.8"/><g fill="#5050d0"><rect x="1" y="9" width="1.200" height="1.200"/><rect x="2" y="12" width="1.200" height="1.200"/><rect x="4" y="7" width="1.200" height="1.200"/><rect x="5" y="3" width="1.200" height="1.200"/><rect x="7" y="5.500" width="1.200" height="1.200"/><rect x="8" y="1.500" width="1.200" height="1.200"/><rect x="10" y="4" width="1.200" height="1.200"/><rect x="12" y="5.500" width="1.200" height="1.200"/><rect x="11.500" y="2" width="1.200" height="1.200"/></g></svg>
<div class="t " style="left:1054px;top:173.00px;font-size:14.67px;letter-spacing:0.000px;">Scatter Plot</div>
<div class="b " style="left:961px;top:203px;width:542px;height:630px;border:1px solid #b4b4b4;"></div>
<svg class="b" style="left:973px;top:222px;" width="12" height="8" viewBox="0 0 12 8"><path d="M0.500 0h11l-5.500 7.500z" fill="#333"/></svg>
<div class="t " style="left:993px;top:214.00px;font-size:14.67px;font-weight:bold;letter-spacing:0.000px;">Plot Parameters</div>
<div class="b " style="left:972px;top:237px;width:521px;height:278px;border:1px solid #d2d2d2;border-radius:2px;background:#ebebeb"></div>
<div class="t " style="left:983.3px;top:277.00px;font-size:14.67px;letter-spacing:0.000px;">Layer</div>
<div class="b combo" style="left:1059px;top:273px;width:422px;height:28px;"></div>
<svg class="b" style="left:1466.0px;top:285.0px;" width="7" height="4" viewBox="0 0 7 4"><path d="M0 0H7L3.5 4z" fill="#4d4d4d"/></svg>
<svg class="b" style="left:1064px;top:280px;" width="17" height="13" viewBox="0 0 17 13"><path d="M2.500 1.500C4.500 0.300 6.500 2.300 8.500 2.300C10.500 2.300 12.500 0.300 14.500 1.500C16.800 3 16.800 9.500 14.500 11C12.500 12.300 10.500 9.800 8.500 9.800C6.500 9.800 4.500 12.300 2.500 11C0.200 9.500 0.200 3 2.500 1.500z" fill="#e8e8e8" stroke="#9a9a9a" stroke-width="1"/></svg>
<div class="t " style="left:1084px;top:277.00px;font-size:14.67px;letter-spacing:-0.170px;">Available areas on candidate parcels</div>
<div class="b " style="left:1059px;top:338px;width:14px;height:14px;border:1px solid #b8b8b8;border-radius:1.5px;background:#f1f1f1"></div>
<div class="t dis" style="left:1078.5px;top:335.00px;font-size:14.67px;letter-spacing:0.000px;">Use only selected features</div>
<div class="t " style="left:982.6px;top:393.00px;font-size:11.6px;letter-spacing:0.000px;">X Field</div>
<div class="b edit" style="left:1059px;top:389px;width:392px;height:28px;"></div>
<div class="b " style="left:1430px;top:390px;width:20px;height:26px;border-left:1px solid #b8b8b8;border-radius:0 2px 2px 0;background:linear-gradient(#fdfdfd,#f0f0f0)"></div>
<svg class="b" style="left:1436.5px;top:401.0px;" width="7" height="4" viewBox="0 0 7 4"><path d="M0 0H7L3.5 4z" fill="#4d4d4d"/></svg>
<div class="t " style="left:1062.8px;top:392.00px;font-size:10.6px;font-weight:bold;letter-spacing:0.000px;color:#5c5c5c;">123</div>
<div class="t " style="left:1083px;top:393.00px;font-size:14.67px;letter-spacing:-0.250px;">Area_Acres</div>
<div class="b " style="left:1457px;top:389px;width:24px;height:28px;border:1px solid #b4b4b4;border-radius:3px;background:linear-gradient(#fefefe,#f0f0f0)"></div>
<div class="t" style="left:1463.6px;top:386.1px;font-family:'Liberation Serif',serif;font-size:23.3px;line-height:28px;color:#5c2d6e;transform:scaleX(1.1);transform-origin:0 0">ε</div>
<div class="t " style="left:983.3px;top:451.00px;font-size:14.67px;letter-spacing:-0.250px;">Y Field</div>
<div class="b edit" style="left:1059px;top:448px;width:392px;height:28px;"></div>
<div class="b " style="left:1430px;top:449px;width:20px;height:26px;border-left:1px solid #b8b8b8;border-radius:0 2px 2px 0;background:linear-gradient(#fdfdfd,#f0f0f0)"></div>
<svg class="b" style="left:1436.5px;top:460.0px;" width="7" height="4" viewBox="0 0 7 4"><path d="M0 0H7L3.5 4z" fill="#4d4d4d"/></svg>
<div class="t " style="left:1062.8px;top:451.00px;font-size:10.6px;font-weight:bold;letter-spacing:0.000px;color:#5c5c5c;">1.2</div>
<div class="t " style="left:1083px;top:452.00px;font-size:14.67px;letter-spacing:-0.250px;">total_acre</div>
<div class="b " style="left:1457px;top:448px;width:24px;height:28px;border:1px solid #b4b4b4;border-radius:3px;background:linear-gradient(#fefefe,#f0f0f0)"></div>
<div class="t" style="left:1463.6px;top:445.1px;font-family:'Liberation Serif',serif;font-size:23.3px;line-height:28px;color:#5c2d6e;transform:scaleX(1.1);transform-origin:0 0">ε</div>
<svg class="b" style="left:973px;top:530px;" width="12" height="8" viewBox="0 0 12 8"><path d="M0.500 0h11l-5.500 7.500z" fill="#333"/></svg>
<div class="t " style="left:993px;top:522.00px;font-size:14.67px;font-weight:bold;letter-spacing:0.000px;">Properties</div>
<div class="b " style="left:972px;top:545px;width:521px;height:278px;border:1px solid #d2d2d2;border-radius:2px;background:#ebebeb"></div>
<div class="t " style="left:983.5px;top:568.00px;font-size:14.67px;letter-spacing:0.000px;">Marker Color</div>
<div class="b combo" style="left:1078px;top:564px;width:166px;height:28px;"></div>
<div class="b " style="left:1083px;top:570px;width:156px;height:16px;background:#8db8d9;border-radius:3px"></div>
<div class="b combo" style="left:1244px;top:564px;width:12px;height:28px;border-radius:2px"></div>
<svg class="b" style="left:1246.5px;top:575.5px;" width="7" height="4" viewBox="0 0 7 4"><path d="M0 0H7L3.5 4z" fill="#4d4d4d"/></svg>
<svg class="b" style="left:1264.5px;top:570.5px;overflow:visible" width="24" height="15" viewBox="0 0 24 15"><path d="M0.800 7.500l5.700-5.200v10.400z" fill="#9a9a9a"/><rect x="6.500" y="2.500" width="11" height="11" fill="#f6f6f6" stroke="#8e8e8e"/><path d="M17.800 10.700h6l-3 3.600z" fill="#555"/><text x="6.900" y="13.300" font-family="Liberation Serif, serif" font-size="25" fill="#585858">ε</text></svg>
<div class="t " style="left:1298.5px;top:568.00px;font-size:14.67px;letter-spacing:-0.220px;">Marker Size</div>
<div class="b edit" style="left:1391px;top:565px;width:54px;height:26px;"></div>
<div class="b " style="left:1430px;top:566px;width:14px;height:24px;border-left:1px solid #c0c0c0;border-radius:0 2px 2px 0;background:linear-gradient(#fdfdfd,#f0f0f0)"></div>
<svg class="b" style="left:1434.0px;top:571.0px;" width="7" height="4" viewBox="0 0 7 4"><path d="M0 4L3.5 0L7 4z" fill="#4d4d4d"/></svg>
<svg class="b" style="left:1434.0px;top:581.0px;" width="7" height="4" viewBox="0 0 7 4"><path d="M0 0H7L3.5 4z" fill="#4d4d4d"/></svg>
<div class="t " style="left:1396.5px;top:568.00px;font-size:14.67px;letter-spacing:0.000px;">10</div>
<svg class="b" style="left:1454px;top:570.5px;overflow:visible" width="24" height="15" viewBox="0 0 24 15"><path d="M0.800 7.500l5.700-5.200v10.400z" fill="#9a9a9a"/><rect x="6.500" y="2.500" width="11" height="11" fill="#f6f6f6" stroke="#8e8e8e"/><path d="M17.800 10.700h6l-3 3.600z" fill="#555"/><text x="6.900" y="13.300" font-family="Liberation Serif, serif" font-size="25" fill="#585858">ε</text></svg>
<div class="t " style="left:983.5px;top:610.00px;font-size:14.67px;letter-spacing:0.000px;">Stroke Color</div>
<div class="b combo" style="left:1078px;top:606px;width:166px;height:28px;"></div>
<div class="b " style="left:1083px;top:612px;width:156px;height:16px;background:#1f77b4;border-radius:3px"></div>
<div class="b combo" style="left:1244px;top:606px;width:12px;height:28px;border-radius:2px"></div>
<svg class="b" style="left:1246.5px;top:617.5px;" width="7" height="4" viewBox="0 0 7 4"><path d="M0 0H7L3.5 4z" fill="#4d4d4d"/></svg>
<div class="t " style="left:1298.5px;top:610.00px;font-size:14.67px;letter-spacing:0.000px;">Stroke Width</div>
<div class="b edit" style="left:1391px;top:607px;width:54px;height:26px;"></div>
<div class="b " style="left:1430px;top:608px;width:14px;height:24px;border-left:1px solid #c0c0c0;border-radius:0 2px 2px 0;background:linear-gradient(#fdfdfd,#f0f0f0)"></div>
<svg class="b" style="left:1434.0px;top:613.0px;" width="7" height="4" viewBox="0 0 7 4"><path d="M0 4L3.5 0L7 4z" fill="#4d4d4d"/></svg>
<svg class="b" style="left:1434.0px;top:623.0px;" width="7" height="4" viewBox="0 0 7 4"><path d="M0 0H7L3.5 4z" fill="#4d4d4d"/></svg>
<div class="t " style="left:1396.5px;top:610.00px;font-size:14.67px;letter-spacing:0.000px;">1</div>
<div class="t " style="left:983.5px;top:652.00px;font-size:14.67px;letter-spacing:0.000px;">Marker type</div>
<div class="b combo" style="left:1078px;top:648px;width:367px;height:28px;"></div>
<div class="t " style="left:1082.8px;top:652.00px;font-size:14.67px;letter-spacing:0.000px;">Points</div>
<svg class="b" style="left:1429.5px;top:660.0px;" width="7" height="4" viewBox="0 0 7 4"><path d="M0 0H7L3.5 4z" fill="#4d4d4d"/></svg>
<div class="t " style="left:983px;top:694.00px;font-size:14.67px;letter-spacing:0.000px;">Point Type</div>
<div class="b combo" style="left:1078px;top:690px;width:178px;height:28px;"></div>
<svg class="b" style="left:1083px;top:695.5px;" width="17" height="17" viewBox="0 0 17 17"><circle cx="8.500" cy="8.500" r="8" fill="#000"/></svg>
<svg class="b" style="left:1240.5px;top:702.0px;" width="7" height="4" viewBox="0 0 7 4"><path d="M0 0H7L3.5 4z" fill="#4d4d4d"/></svg>
<div class="t " style="left:983.5px;top:736.00px;font-size:14.67px;letter-spacing:0.000px;">Line Type</div>
<div class="b combo" style="left:1078px;top:732px;width:178px;height:28px;"></div>
<div class="t " style="left:1083.6px;top:735.00px;font-size:14.67px;letter-spacing:0.000px;transform:scaleX(1.1);transform-origin:0 0">—</div>
<div class="t " style="left:1103.5px;top:736.00px;font-size:14.67px;letter-spacing:0.000px;">Solid Line</div>
<svg class="b" style="left:1240.5px;top:744.0px;" width="7" height="4" viewBox="0 0 7 4"><path d="M0 0H7L3.5 4z" fill="#4d4d4d"/></svg>
<div class="t " style="left:983px;top:778.00px;font-size:14.67px;letter-spacing:-0.170px;">Transparency</div>
<svg class="b" style="left:1079px;top:779px;" width="305" height="5" viewBox="0 0 305 5"><rect x="6" y="0" width="1" height="4" fill="#c4c4c4"/><rect x="21" y="0" width="1" height="4" fill="#c4c4c4"/><rect x="35" y="0" width="1" height="4" fill="#c4c4c4"/><rect x="50" y="0" width="1" height="4" fill="#c4c4c4"/><rect x="64" y="0" width="1" height="4" fill="#c4c4c4"/><rect x="79" y="0" width="1" height="4" fill="#c4c4c4"/><rect x="94" y="0" width="1" height="4" fill="#c4c4c4"/><rect x="108" y="0" width="1" height="4" fill="#c4c4c4"/><rect x="123" y="0" width="1" height="4" fill="#c4c4c4"/><rect x="137" y="0" width="1" height="4" fill="#c4c4c4"/><rect x="152" y="0" width="1" height="4" fill="#c4c4c4"/><rect x="167" y="0" width="1" height="4" fill="#c4c4c4"/><rect x="181" y="0" width="1" height="4" fill="#c4c4c4"/><rect x="196" y="0" width="1" height="4" fill="#c4c4c4"/><rect x="210" y="0" width="1" height="4" fill="#c4c4c4"/><rect x="225" y="0" width="1" height="4" fill="#c4c4c4"/><rect x="240" y="0" width="1" height="4" fill="#c4c4c4"/><rect x="254" y="0" width="1" height="4" fill="#c4c4c4"/><rect x="269" y="0" width="1" height="4" fill="#c4c4c4"/><rect x="283" y="0" width="1" height="4" fill="#c4c4c4"/><rect x="298" y="0" width="1" height="4" fill="#c4c4c4"/></svg>
<div class="b " style="left:1079px;top:790px;width:305px;height:4px;border:1px solid #b4b4b4;border-radius:2px;background:#d4d4d4"></div>
<div class="b " style="left:1079px;top:785px;width:13px;height:13px;border:1px solid #a9a9a9;border-radius:3px;background:linear-gradient(#ffffff,#f0f0f0)"></div>
<div class="b edit" style="left:1391px;top:775px;width:54px;height:26px;"></div>
<div class="b " style="left:1430px;top:776px;width:14px;height:24px;border-left:1px solid #c0c0c0;border-radius:0 2px 2px 0;background:linear-gradient(#fdfdfd,#f0f0f0)"></div>
<svg class="b" style="left:1434.0px;top:781.0px;" width="7" height="4" viewBox="0 0 7 4"><path d="M0 4L3.5 0L7 4z" fill="#4d4d4d"/></svg>
<svg class="b" style="left:1434.0px;top:791.0px;" width="7" height="4" viewBox="0 0 7 4"><path d="M0 0H7L3.5 4z" fill="#4d4d4d"/></svg>
<div class="t " style="left:1396.5px;top:778.00px;font-size:14.67px;letter-spacing:0.000px;">0</div>
<svg class="b" style="left:935px;top:460px;" width="1" height="16" viewBox="0 0 1 16"><rect x="0" y="0" width="1" height="1" fill="#bdbdbd"/><rect x="0" y="3" width="1" height="1" fill="#bdbdbd"/><rect x="0" y="6" width="1" height="1" fill="#bdbdbd"/><rect x="0" y="9" width="1" height="1" fill="#bdbdbd"/><rect x="0" y="12" width="1" height="1" fill="#bdbdbd"/><rect x="0" y="15" width="1" height="1" fill="#bdbdbd"/></svg>
<div class="t " style="left:948.5px;top:837.00px;font-size:14.67px;letter-spacing:0.220px;">x: 224.967 mm</div>
<div class="t " style="left:1055.2px;top:837.00px;font-size:14.67px;letter-spacing:0.150px;">y: 91.1422 mm</div>
<div class="t " style="left:1161.3px;top:837.00px;font-size:14.67px;letter-spacing:-0.300px;">page: 1</div>
<div class="b " style="left:1267px;top:841px;width:135px;height:21px;overflow:hidden"><div class="b" style="left:0;top:-4px;width:135px;height:25px;border:1px solid #b0b0b0;border-radius:3px;background:#fff"></div><div class="b" style="left:114px;top:-3px;width:20px;height:23px;border-left:1px solid #b8b8b8;border-radius:0 2px 2px 0;background:linear-gradient(#fdfdfd,#f0f0f0)"></div></div>
<svg class="b" style="left:1387.0px;top:846.0px;" width="7" height="4" viewBox="0 0 7 4"><path d="M0 0H7L3.5 4z" fill="#4d4d4d"/></svg>
<div class="t " style="left:1271.6px;top:837.00px;font-size:14.67px;letter-spacing:-0.400px;">82.4%</div>
<div class="b " style="left:1409px;top:846px;width:98px;height:4px;border:1px solid #b4b4b4;border-radius:2px;background:#d4d4d4"></div>
<div class="b " style="left:1409px;top:846px;width:9px;height:4px;border:1px solid #2a76c6;border-radius:2px;background:#4a9be0"></div>
<div class="b " style="left:1416px;top:842px;width:13px;height:12px;border:1px solid #a9a9a9;border-radius:3px;background:linear-gradient(#ffffff,#f0f0f0)"></div>
<svg class="b" style="left:1519px;top:853px;" width="11" height="11" viewBox="0 0 11 11"><rect x="0" y="9" width="1.500" height="1.500" fill="#c2c2c2"/><rect x="3" y="6" width="1.500" height="1.500" fill="#c2c2c2"/><rect x="3" y="9" width="1.500" height="1.500" fill="#c2c2c2"/><rect x="6" y="3" width="1.500" height="1.500" fill="#c2c2c2"/><rect x="6" y="6" width="1.500" height="1.500" fill="#c2c2c2"/><rect x="6" y="9" width="1.500" height="1.500" fill="#c2c2c2"/><rect x="9" y="0" width="1.500" height="1.500" fill="#c2c2c2"/><rect x="9" y="3" width="1.500" height="1.500" fill="#c2c2c2"/><rect x="9" y="6" width="1.500" height="1.500" fill="#c2c2c2"/><rect x="9" y="9" width="1.500" height="1.500" fill="#c2c2c2"/></svg>
</body></html>
